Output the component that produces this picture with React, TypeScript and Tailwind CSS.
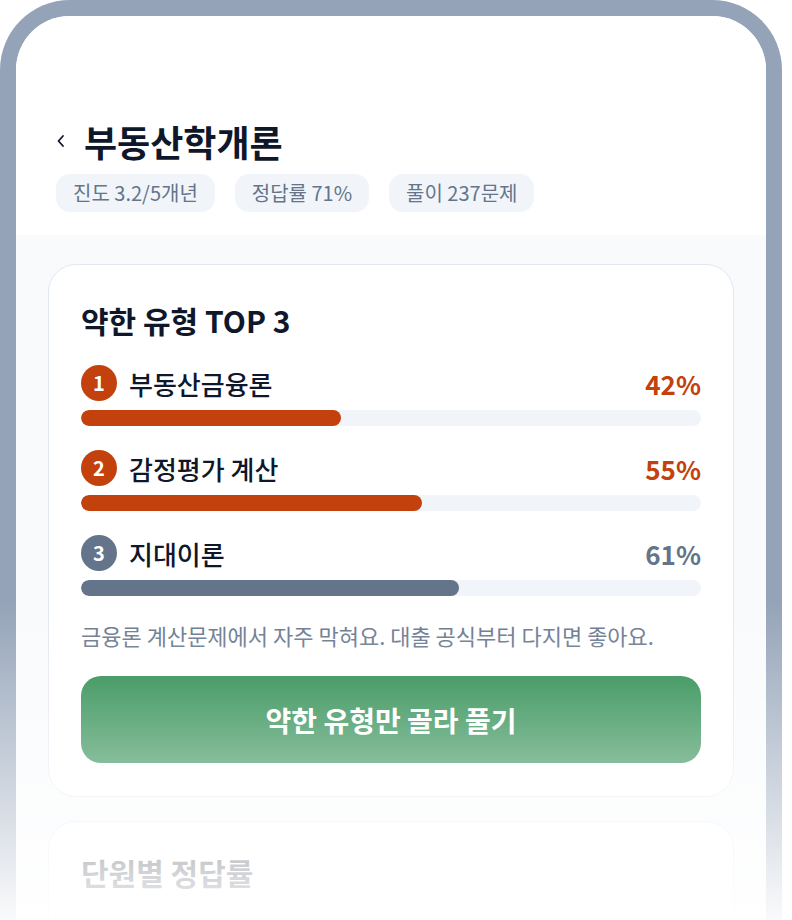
import React from "react";

type WeakItem = {
  rank: number;
  name: string;
  rate: number;
  tone: "hot" | "mute";
};

const weakItems: WeakItem[] = [
  { rank: 1, name: "부동산금융론", rate: 42, tone: "hot" },
  { rank: 2, name: "감정평가 계산", rate: 55, tone: "hot" },
  { rank: 3, name: "지대이론", rate: 61, tone: "mute" },
];

const stats = ["진도 3.2/5개년", "정답률 71%", "풀이 237문제"];

const WeakRow: React.FC<{ item: WeakItem }> = ({ item }) => {
  const hot = item.tone === "hot";
  return (
    <div className="flex flex-col">
      <div className="flex items-center h-9">
        <div
          className={`w-9 h-9 rounded-full flex items-center justify-center text-white text-[20px] font-bold ${
            hot ? "bg-[#c2410c]" : "bg-[#64748b]"
          }`}
        >
          {item.rank}
        </div>
        <span className="ml-3 text-[26px] font-medium text-[#0f172a]">
          {item.name}
        </span>
        <span
          className={`ml-auto text-[26px] font-bold ${
            hot ? "text-[#c2410c]" : "text-[#64748b]"
          }`}
        >
          {item.rate}%
        </span>
      </div>
      <div className="mt-[9px] h-4 rounded-full bg-[#f1f5f9] overflow-hidden">
        <div
          className={`h-full rounded-full ${
            hot ? "bg-[#c2410c]" : "bg-[#64748b]"
          }`}
          style={{ width: `${item.rate}%` }}
        />
      </div>
    </div>
  );
};

export default function App() {
  return (
    <div
      className="relative h-[920px] w-[792px] overflow-hidden bg-white"
      style={{ fontFamily: '"Noto Sans CJK KR", "Noto Sans", sans-serif' }}
    >
      {/* phone frame */}
      <div className="w-[782px] h-[1000px] border-[16px] border-b-0 border-[#94a3b8] rounded-t-[70px] overflow-hidden bg-[#f8fafc]">
        {/* Header */}
        <div className="bg-white px-10 pt-[105px] pb-[23px]">
          <div className="flex items-center h-10">
            <svg width="10" height="16" viewBox="0 0 10 16" className="mr-[18px]">
              <polyline
                points="7,3 2.5,8 7,13"
                fill="none"
                stroke="#0f172a"
                strokeWidth="1.8"
                strokeLinecap="round"
                strokeLinejoin="round"
              />
            </svg>
            <h1 className="text-[36px] font-bold text-[#0f172a] leading-10">
              부동산학개론
            </h1>
          </div>
          <div className="mt-[13px] flex gap-[20px]">
            {stats.map((s) => (
              <div
                key={s}
                className="h-[38px] px-[17px] rounded-[14px] bg-[#f1f5f9] flex items-center text-[20px] text-[#64748b]"
              >
                {s}
              </div>
            ))}
          </div>
        </div>

        {/* Body */}
        <div className="px-8 pt-[29px] flex flex-col gap-6">
          <div className="rounded-[28px] border border-[#e2e8f0] bg-white px-8 pt-8 pb-[33px]">
            <h2 className="text-[30px] font-bold text-[#0f172a] leading-[46px]">
              약한 유형 TOP 3
            </h2>
            <div className="mt-[22px] flex flex-col gap-6">
              {weakItems.map((it) => (
                <WeakRow key={it.rank} item={it} />
              ))}
            </div>
            <p className="mt-6 text-[22px] text-[#64748b] leading-[30px]">
              금융론 계산문제에서 자주 막혀요. 대출 공식부터 다지면 좋아요.
            </p>
            <button className="mt-[26px] w-full h-[87px] rounded-[20px] bg-[#15803d] text-white text-[28px] font-bold">
              약한 유형만 골라 풀기
            </button>
          </div>

          <div className="rounded-[28px] border border-[#e2e8f0] bg-white px-8 pt-[27px] h-[200px]">
            <h2 className="text-[30px] font-bold text-[#0f172a] leading-[46px]">
              단원별 정답률
            </h2>
          </div>
        </div>
      </div>

      {/* bottom fade */}
      <div className="pointer-events-none absolute left-0 right-0 top-[600px] h-[320px] bg-gradient-to-b from-white/0 to-white/95" />
    </div>
  );
}
